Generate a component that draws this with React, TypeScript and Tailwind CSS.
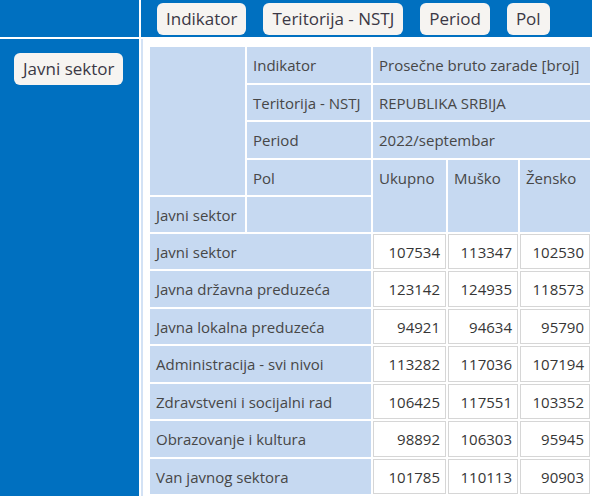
const filters = ["Indikator", "Teritorija - NSTJ", "Period", "Pol"];

const rows: [string, string, string, string][] = [
  ["Javni sektor", "107534", "113347", "102530"],
  ["Javna državna preduzeća", "123142", "124935", "118573"],
  ["Javna lokalna preduzeća", "94921", "94634", "95790"],
  ["Administracija - svi nivoi", "113282", "117036", "107194"],
  ["Zdravstveni i socijalni rad", "106425", "117551", "103352"],
  ["Obrazovanje i kultura", "98892", "106303", "95945"],
  ["Van javnog sektora", "101785", "110113", "90903"],
];

const Chip: React.FC<{ label: string }> = ({ label }) => (
  <span className="h-8 px-[9px] flex items-center rounded-md bg-[#f6f4f1] text-[17px] text-[#3b3845] whitespace-nowrap">
    {label}
  </span>
);

const head = "bg-[#c6d9f1] text-[#474747] px-[6px] flex items-center whitespace-nowrap";
const top = "bg-[#c6d9f1] text-[#474747] px-[6px] pt-[8px]";
const num = "bg-white border border-[#d6d6d6] text-[#363636] px-[5px] flex items-center justify-end";

export default function App() {
  return (
    <div
      className="w-[592px] h-[496px] overflow-hidden bg-white grid grid-cols-[139px_1fr] grid-rows-[37px_1fr] gap-[2px] text-[15px] leading-5"
      style={{ fontFamily: '"Open Sans", "Liberation Sans", sans-serif' }}
    >
      <div className="bg-[#0070c0]" />
      <div className="bg-[#0070c0] flex items-center gap-[17px] pl-4">
        {filters.map((f) => (
          <Chip key={f} label={f} />
        ))}
      </div>
      <div className="bg-[#0070c0] pt-[14px] pl-[14px]">
        <div className="inline-flex">
          <Chip label="Javni sektor" />
        </div>
      </div>
      <div className="border-l-[2px] border-[#d3e2f5] pl-[7px] pt-2">
        <div className="grid grid-cols-[95px_124px_73px_70px_70px] grid-rows-[36px_35px_36px_35px_35px_35px_36px_35px_36px_35px_36px_35px] gap-[2px]">
          <div className="bg-[#c6d9f1] col-start-1 row-start-1 row-span-4" />
          <div className={`${head} col-start-2 row-start-1`}>Indikator</div>
          <div className={`${head} col-start-3 col-span-3 row-start-1`}>Prosečne bruto zarade [broj]</div>
          <div className={`${head} col-start-2 row-start-2`}>Teritorija - NSTJ</div>
          <div className={`${head} col-start-3 col-span-3 row-start-2`}>REPUBLIKA SRBIJA</div>
          <div className={`${head} col-start-2 row-start-3`}>Period</div>
          <div className={`${head} col-start-3 col-span-3 row-start-3`}>2022/septembar</div>
          <div className={`${head} col-start-2 row-start-4`}>Pol</div>
          <div className={`${top} col-start-3 row-start-4 row-span-2`}>Ukupno</div>
          <div className={`${top} col-start-4 row-start-4 row-span-2`}>Muško</div>
          <div className={`${top} col-start-5 row-start-4 row-span-2`}>Žensko</div>
          <div className={`${head} col-start-1 row-start-5`}>Javni sektor</div>
          <div className="bg-[#c6d9f1] col-start-2 row-start-5" />
          {rows.map(([label, a, b, c]) => (
            <div key={label} className="contents">
              <div className={`${head} col-span-2`}>{label}</div>
              <div className={num}>{a}</div>
              <div className={num}>{b}</div>
              <div className={num}>{c}</div>
            </div>
          ))}
        </div>
      </div>
    </div>
  );
}
